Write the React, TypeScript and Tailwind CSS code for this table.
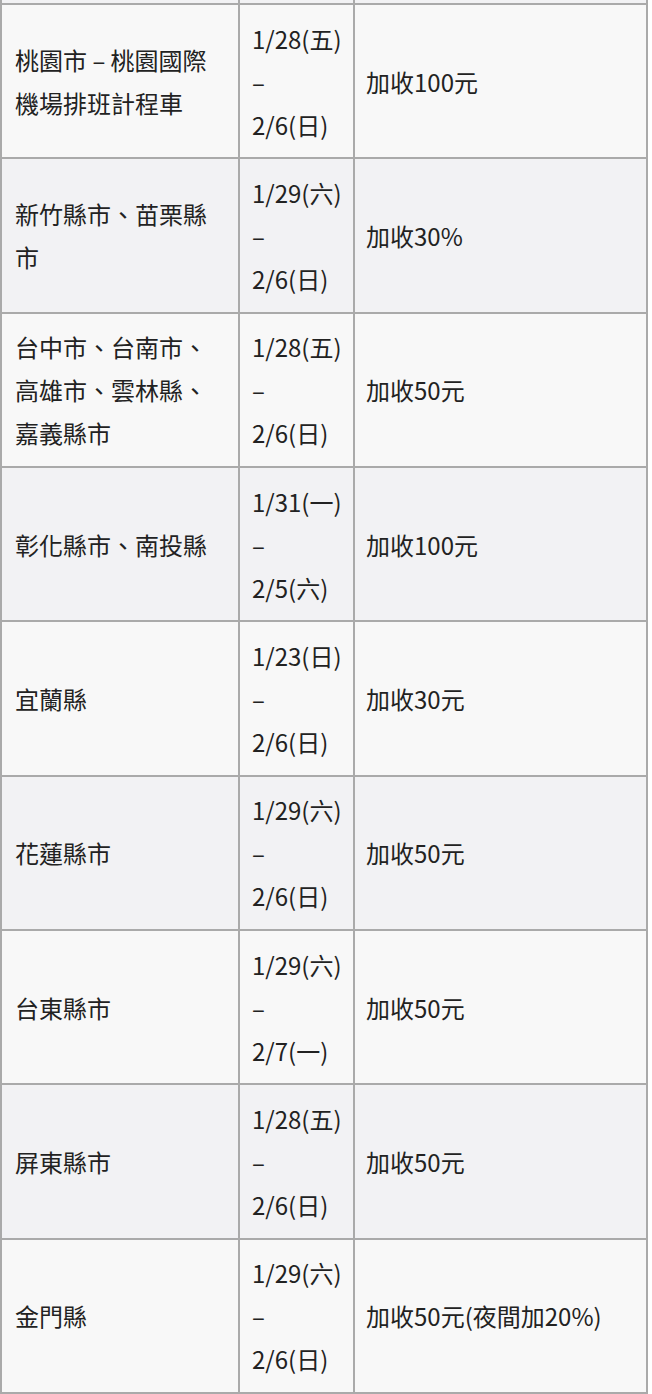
import React from "react";

type Row = { region: string[]; from: string; to: string; fee: string };

const rows: Row[] = [
  { region: ["桃園市 – 桃園國際", "機場排班計程車"], from: "1/28(五)", to: "2/6(日)", fee: "加收100元" },
  { region: ["新竹縣市、苗栗縣", "市"], from: "1/29(六)", to: "2/6(日)", fee: "加收30%" },
  { region: ["台中市、台南市、", "高雄市、雲林縣、", "嘉義縣市"], from: "1/28(五)", to: "2/6(日)", fee: "加收50元" },
  { region: ["彰化縣市、南投縣"], from: "1/31(一)", to: "2/5(六)", fee: "加收100元" },
  { region: ["宜蘭縣"], from: "1/23(日)", to: "2/6(日)", fee: "加收30元" },
  { region: ["花蓮縣市"], from: "1/29(六)", to: "2/6(日)", fee: "加收50元" },
  { region: ["台東縣市"], from: "1/29(六)", to: "2/7(一)", fee: "加收50元" },
  { region: ["屏東縣市"], from: "1/28(五)", to: "2/6(日)", fee: "加收50元" },
  { region: ["金門縣"], from: "1/29(六)", to: "2/6(日)", fee: "加收50元(夜間加20%)" },
];

export default function App() {
  return (
    <div
      className="w-[652px] h-[1394px] overflow-hidden bg-white text-[#222222] text-[24px] leading-[43px]"
      style={{ fontFamily: '"Noto Sans CJK TC", "Noto Sans", sans-serif' }}
    >
      <div className="w-[648px] border-x-2 border-[#aaaaaa]">
        <div className="grid grid-cols-[238px_115px_291px] h-[5px] border-b-2 border-[#aaaaaa] bg-[#f2f2f4]">
          <div className="border-r-2 border-[#aaaaaa]" />
          <div className="border-r-2 border-[#aaaaaa]" />
          <div />
        </div>
        {rows.map((r, i) => (
          <div
            key={i}
            className={`grid grid-cols-[238px_115px_291px] h-[154.33px] border-b-2 border-[#aaaaaa] ${
              i % 2 === 0 ? "bg-[#f8f8f8]" : "bg-[#f2f2f4]"
            }`}
          >
            <div className="border-r-2 border-[#aaaaaa] flex flex-col justify-center pl-[13px] pr-2">
              {r.region.map((l, j) => (
                <div key={j} className="whitespace-nowrap">{l}</div>
              ))}
            </div>
            <div className="border-r-2 border-[#aaaaaa] flex flex-col justify-center pl-[12px]">
              <div className="whitespace-nowrap">{r.from}</div>
              <div>–</div>
              <div className="whitespace-nowrap">{r.to}</div>
            </div>
            <div className="flex flex-col justify-center pl-[11px]">
              <div className="whitespace-nowrap">{r.fee}</div>
            </div>
          </div>
        ))}
      </div>
    </div>
  );
}
